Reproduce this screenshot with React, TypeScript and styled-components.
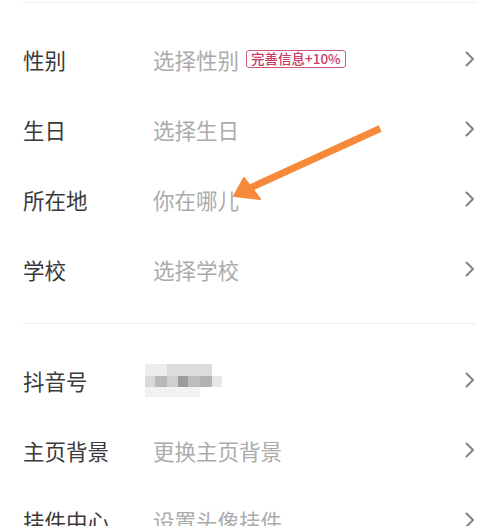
import styled, { createGlobalStyle } from "styled-components";

const GlobalStyle = createGlobalStyle`
    html, body {
        margin: 0;
        padding: 0;
        background-color: #ffffff;
    }

    body {
        font-family: "Noto Sans CJK SC", "Noto Sans", sans-serif;
        overflow: hidden;
    }
`

interface RowItem {
    label: string
    value?: string
    badge?: string
    mosaic?: boolean
}

const basicInfo: RowItem[] = [
    { label: "性别", value: "选择性别", badge: "完善信息+10%" },
    { label: "生日", value: "选择生日" },
    { label: "所在地", value: "你在哪儿" },
    { label: "学校", value: "选择学校" },
];

const accountInfo: RowItem[] = [
    { label: "抖音号", mosaic: true },
    { label: "主页背景", value: "更换主页背景" },
    { label: "挂件中心", value: "设置头像挂件" },
];

// blurred id, drawn as mosaic blocks
const mosaicCells = [
    { x: 0, y: 0, w: 22, h: 12, c: "#ededed" },
    { x: 22, y: 0, w: 45, h: 12, c: "#dcdcdc" },
    { x: 0, y: 12, w: 10, h: 11, c: "#d9d9d9" },
    { x: 10, y: 12, w: 12, h: 11, c: "#b9b9b9" },
    { x: 22, y: 12, w: 11, h: 11, c: "#d0d0d0" },
    { x: 33, y: 12, w: 10, h: 11, c: "#9c9c9c" },
    { x: 43, y: 12, w: 12, h: 11, c: "#bdbdbd" },
    { x: 55, y: 12, w: 12, h: 11, c: "#b2b2b2" },
    { x: 67, y: 12, w: 10, h: 11, c: "#e6e6e6" },
    { x: 0, y: 23, w: 33, h: 10, c: "#f1f1f1" },
    { x: 33, y: 23, w: 22, h: 10, c: "#f3f3f3" },
];

function Chevron() {
    return (
        <ChevronIcon width="10" height="16" viewBox="0 0 10 16">
            <polyline points="1.5,1.5 8,8 1.5,14.5" fill="none" stroke="#848484" strokeWidth="2" strokeLinecap="round" strokeLinejoin="round" />
        </ChevronIcon>
    );
}

function SettingRow({ item }: { item: RowItem }) {
    return (
        <Row>
            <Label>{item.label}</Label>
            <ValueBox>
                {item.mosaic ? (
                    <Mosaic width="77" height="33" viewBox="0 0 77 33">
                        {mosaicCells.map((cell, i) => (
                            <rect key={i} x={cell.x} y={cell.y} width={cell.w} height={cell.h} fill={cell.c} />
                        ))}
                    </Mosaic>
                ) : (
                    <Value>{item.value}</Value>
                )}
                {item.badge && <Badge>{item.badge}</Badge>}
            </ValueBox>
            <Chevron />
        </Row>
    );
}

export default function App() {
    return (
        <>
            <GlobalStyle />
            <Page>
                <Section>
                    {basicInfo.map((item) => <SettingRow key={item.label} item={item} />)}
                </Section>
                <Section>
                    {accountInfo.map((item) => <SettingRow key={item.label} item={item} />)}
                </Section>
                <Arrow width="500" height="526" viewBox="0 0 500 526">
                    <line x1="377" y1="130" x2="250" y2="188" stroke="#f68a3a" strokeWidth="7" strokeLinecap="square" />
                    <polygon points="234,196 244,178 260,199" fill="#f68a3a" stroke="#f68a3a" strokeWidth="2" strokeLinejoin="round" />
                </Arrow>
            </Page>
        </>
    );
}

const Page = styled.div`
    position: relative;
    width: 500px;
    height: 526px;
    overflow: hidden;

    padding: 2px 23px 0;
    box-sizing: border-box;
`

const Section = styled.section`
    display: flex;
    flex-direction: column;

    border-top: 1px solid #efefef;
    padding-top: 21px;
    padding-bottom: 19px;
`

const Row = styled.div`
    display: grid;
    grid-template-columns: 130px 1fr auto;
    align-items: center;

    height: 70px;
`

const Label = styled.span`
    font-size: 21.5px;
    color: #3a3a3a;
    white-space: nowrap;
`

const ValueBox = styled.div`
    display: flex;
    align-items: center;
    gap: 7px;
`

const Value = styled.span`
    font-size: 21.5px;
    color: #ababab;
    white-space: nowrap;
`

const Badge = styled.span`
    display: inline-flex;
    align-items: center;

    height: 18px;
    padding: 0 4px;
    box-sizing: border-box;

    border: 1px solid #cf5a7c;
    border-radius: 3px;

    font-size: 13.5px;
    font-weight: 500;
    line-height: 1;
    color: #c93a64;
    white-space: nowrap;
`

const Mosaic = styled.svg`
    display: block;
    margin-left: -8px;
`

const ChevronIcon = styled.svg`
    display: block;
    margin-right: 2px;
`

const Arrow = styled.svg`
    position: absolute;
    left: 0;
    top: 0;
    pointer-events: none;
`
